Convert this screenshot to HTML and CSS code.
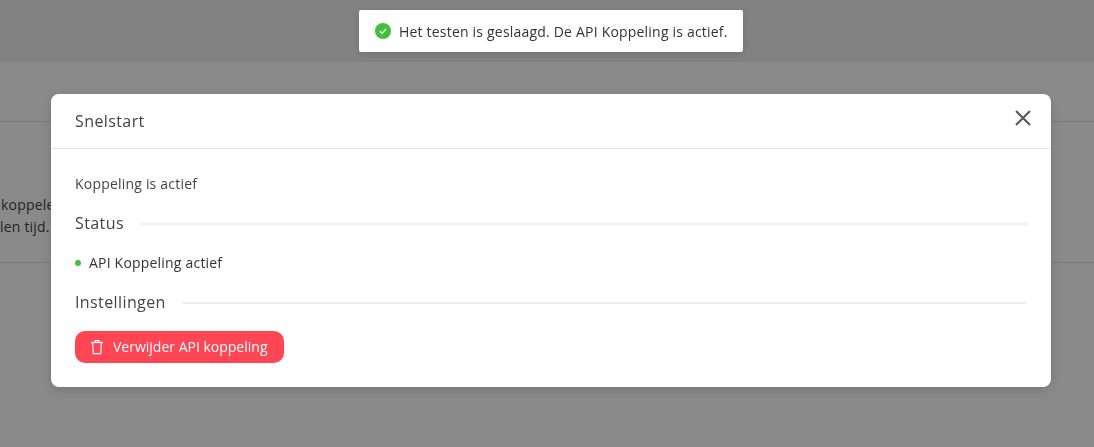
FILE: index.html
```html
<html>
  <head>
    <title>Snelstart</title>
    <link rel="stylesheet" href="styles.css">
  </head>

  <body>
    <div class="page">
      <div class="page-top"></div>
      <div class="page-head"></div>
      <div class="page-body">
        <p class="cut-line">koppelen</p>
        <p>len tijd.</p>
      </div>
      <div class="page-foot"></div>
    </div>

    <div class="backdrop">
      <div class="modal">
        <div class="modal-head">
          <h2>Snelstart</h2>
          <button class="close-button" aria-label="Sluiten">
            <svg width="16" height="16" viewBox="0 0 16 16">
              <path d="M1 1 L15 15 M15 1 L1 15" stroke="#555" stroke-width="2" fill="none" />
            </svg>
          </button>
        </div>
        <div class="modal-body">
          <p class="intro">Koppeling is actief</p>
          <div class="divider"><span>Status</span></div>
          <p class="status"><i class="dot"></i>API Koppeling actief</p>
          <div class="divider"><span>Instellingen</span></div>
          <button class="danger-button">
            <svg width="14" height="16" viewBox="0 0 14 16" fill="none" stroke="#fff" stroke-width="1.2">
              <path d="M1 3.5 H13" />
              <path d="M5 3.5 V1.6 H9 V3.5" />
              <path d="M2.6 3.5 L3.3 14.6 H10.7 L11.4 3.5" />
            </svg>
            <span class="button-label">Verwijder API koppeling</span>
          </button>
        </div>
      </div>
    </div>

    <div class="toast">
      <svg width="16" height="16" viewBox="0 0 16 16">
        <circle cx="8" cy="8" r="8" fill="#3fc23a" />
        <path d="M5 8.2 L7.2 10.3 L11 6" stroke="#fff" stroke-width="1.4" fill="none" />
      </svg>
      <span>Het testen is geslaagd. De API Koppeling is actief.</span>
    </div>
  </body>
</html>
```

FILE: styles.css
```css
html,
body {
  height: 100%;
}

body {
  margin: 0;
  overflow: hidden;
  background: #fff;
  font-family: "Open Sans", sans-serif;
  font-size: 14px;
  letter-spacing: 0.2px;
  color: #333;
}

p {
  margin: 0;
}

.page-top {
  height: 62px;
  background: #f0f0f0;
}

.page-head {
  height: 59px;
  border-bottom: 1px solid #e6e6e6;
  background: #fff;
}

.page-body {
  box-sizing: border-box;
  height: 141px;
  padding-top: 72px;
  border-bottom: 1px solid #e6e6e6;
  white-space: nowrap;
  line-height: 22px;
  color: #444;
}

.cut-line {
  padding-left: 1px;
}

.backdrop {
  position: fixed;
  top: 0;
  left: 0;
  right: 0;
  bottom: 0;
  background: rgba(0, 0, 0, 0.46);
  display: flex;
  align-items: flex-start;
  padding: 94px 0 0 51px;
}

.modal {
  width: 1000px;
  height: 293px;
  background: #fff;
  border-radius: 8px;
  box-shadow: 0 4px 14px rgba(0, 0, 0, 0.15);
}

.modal-head {
  height: 54px;
  border-bottom: 1px solid #e4e4e4;
  display: flex;
  align-items: center;
  justify-content: space-between;
  padding: 0 20px 0 24px;
}

.modal-head h2 {
  margin: 0;
  font-size: 16px;
  font-weight: 500;
  letter-spacing: 0.4px;
  color: #444;
}

.close-button {
  border: none;
  background: none;
  padding: 0;
  height: 16px;
  margin-top: -6px;
}

.modal-body {
  padding: 25px 24px 0;
}

.intro {
  line-height: 20px;
  color: #444;
}

.divider {
  display: flex;
  align-items: center;
  gap: 16px;
  margin-top: 14px;
  height: 30px;
  font-size: 16px;
  font-weight: 500;
  letter-spacing: 0.4px;
  color: #444;
}

.divider::after {
  content: "";
  flex: 1;
  height: 2px;
  margin-top: 2px;
  background: #f0f0f0;
}

.status {
  display: flex;
  align-items: center;
  margin-top: 15px;
  line-height: 20px;
  height: 20px;
}

.dot {
  width: 6px;
  height: 6px;
  border-radius: 50%;
  background: #3fc23a;
  margin-right: 8px;
}

.status + .divider {
  margin-top: 14px;
}

.danger-button {
  display: flex;
  align-items: center;
  gap: 9px;
  margin-top: 14px;
  height: 32px;
  padding: 0 16px 0 15px;
  border: none;
  border-radius: 10px;
  background: #ff4654;
  color: #fff;
  font: 500 14px "Open Sans", sans-serif;
  white-space: nowrap;
}

.button-label {
  margin-top: -2px;
  padding-right: 1px;
}

.toast {
  position: fixed;
  top: 10px;
  left: 359px;
  width: 384px;
  height: 42px;
  box-sizing: border-box;
  padding-left: 16px;
  display: flex;
  align-items: center;
  gap: 8px;
  background: #fff;
  border-radius: 2px;
  box-shadow: 0 2px 8px rgba(0, 0, 0, 0.15);
  color: #333;
}
```
